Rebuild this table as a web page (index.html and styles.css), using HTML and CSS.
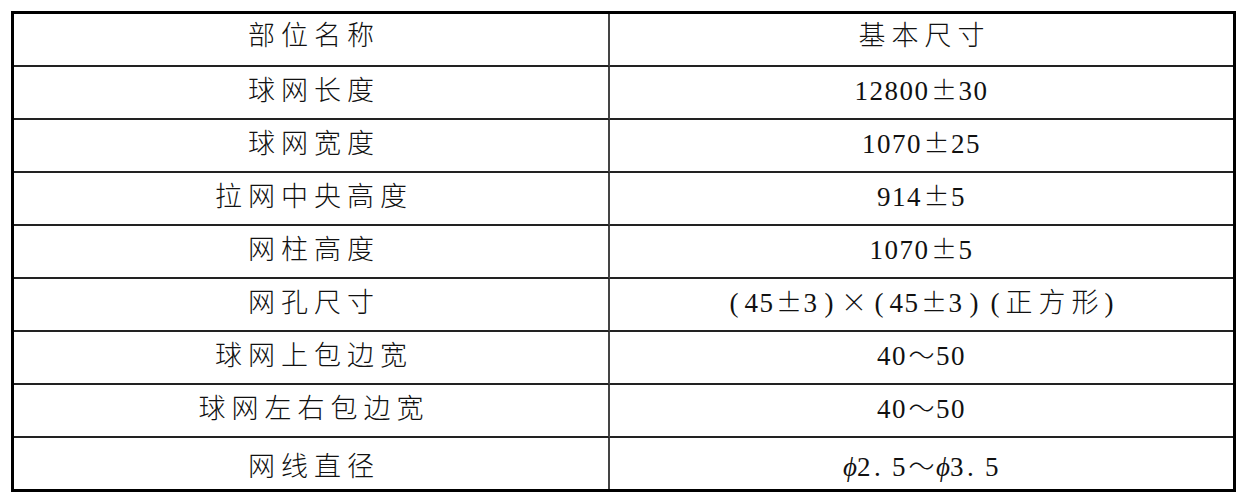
FILE: index.html
```html
<!DOCTYPE html>
<html lang="zh-CN">
<head>
<meta charset="utf-8">
<title>球网尺寸</title>
<link rel="stylesheet" href="styles.css">
</head>
<body>
<table class="spec">
  <tbody>
    <tr><td class="name"><span class="zh">部位名称</span></td><td class="val"><span class="zh">基本尺寸</span></td></tr>
    <tr><td class="name"><span class="zh">球网长度</span></td><td class="val"><span class="num">12800</span><span class="sym">±</span><span class="num">30</span></td></tr>
    <tr><td class="name"><span class="zh">球网宽度</span></td><td class="val"><span class="num">1070</span><span class="sym">±</span><span class="num">25</span></td></tr>
    <tr><td class="name"><span class="zh">拉网中央高度</span></td><td class="val"><span class="num">914</span><span class="sym">±</span><span class="num">5</span></td></tr>
    <tr><td class="name"><span class="zh">网柱高度</span></td><td class="val"><span class="num">1070</span><span class="sym">±</span><span class="num">5</span></td></tr>
    <tr><td class="name"><span class="zh">网孔尺寸</span></td><td class="val"><span class="par">(</span><span class="num">45</span><span class="sym">±</span><span class="num">3</span><span class="par">)</span><span class="sym">×</span><span class="par">(</span><span class="num">45</span><span class="sym">±</span><span class="num">3</span><span class="par">)</span><span class="par">(</span><span class="zh">正方形</span><span class="par">)</span></td></tr>
    <tr><td class="name"><span class="zh">球网上包边宽</span></td><td class="val"><span class="num">40</span><span class="sym">～</span><span class="num">50</span></td></tr>
    <tr><td class="name"><span class="zh">球网左右包边宽</span></td><td class="val"><span class="num">40</span><span class="sym">～</span><span class="num">50</span></td></tr>
    <tr><td class="name"><span class="zh">网线直径</span></td><td class="val"><i class="phi">ϕ</i><span class="num">2</span><span class="dot">.</span><span class="num">5</span><span class="sym">～</span><i class="phi">ϕ</i><span class="num">3</span><span class="dot">.</span><span class="num">5</span></td></tr>
  </tbody>
</table>
</body>
</html>
```

FILE: styles.css
```css
html, body {
  margin: 0;
  padding: 0;
  background: #ffffff;
}

.spec {
  margin: 11px 0 0 11px;
  width: 1225px;
  border: 3px solid #000;
  border-collapse: separate;
  border-spacing: 0;
  font-size: 26px;
  color: #111;
  table-layout: fixed;
}

.spec td {
  box-sizing: border-box;
  height: 53px;
  padding: 0 0 8px 0;
  text-align: center;
  vertical-align: middle;
  border-bottom: 2px solid #222;
  white-space: nowrap;
}

.spec tr:first-child td {
  height: 52px;
  padding-bottom: 12px;
}

.spec tr:last-child td {
  border-bottom: none;
  height: 51px;
  padding: 2px 0 0 0;
}

.spec td.name {
  width: 596px;
  border-right: 2px solid #444;
}

.num, .par, .dot, .phi {
  font-family: "Liberation Serif", "Tinos", "Times New Roman", "DejaVu Serif", serif;
  font-size: 27px;
}

.num {
  letter-spacing: 1.5px;
}

.zh {
  font-family: "Noto Sans CJK SC", sans-serif;
  font-size: 27px;
  font-weight: 300;
  letter-spacing: 6px;
  margin-right: -6px;
}

.sym {
  display: inline-block;
  width: 29px;
  text-align: center;
  font-family: "Noto Sans CJK SC", sans-serif;
  font-weight: 300;
  font-size: 26px;
}

.par {
  display: inline-block;
  width: 21px;
  text-align: center;
}

.phi {
  font-style: italic;
}

.dot {
  display: inline-block;
  width: 20px;
  text-align: left;
  padding-left: 2px;
  box-sizing: border-box;
}
```
